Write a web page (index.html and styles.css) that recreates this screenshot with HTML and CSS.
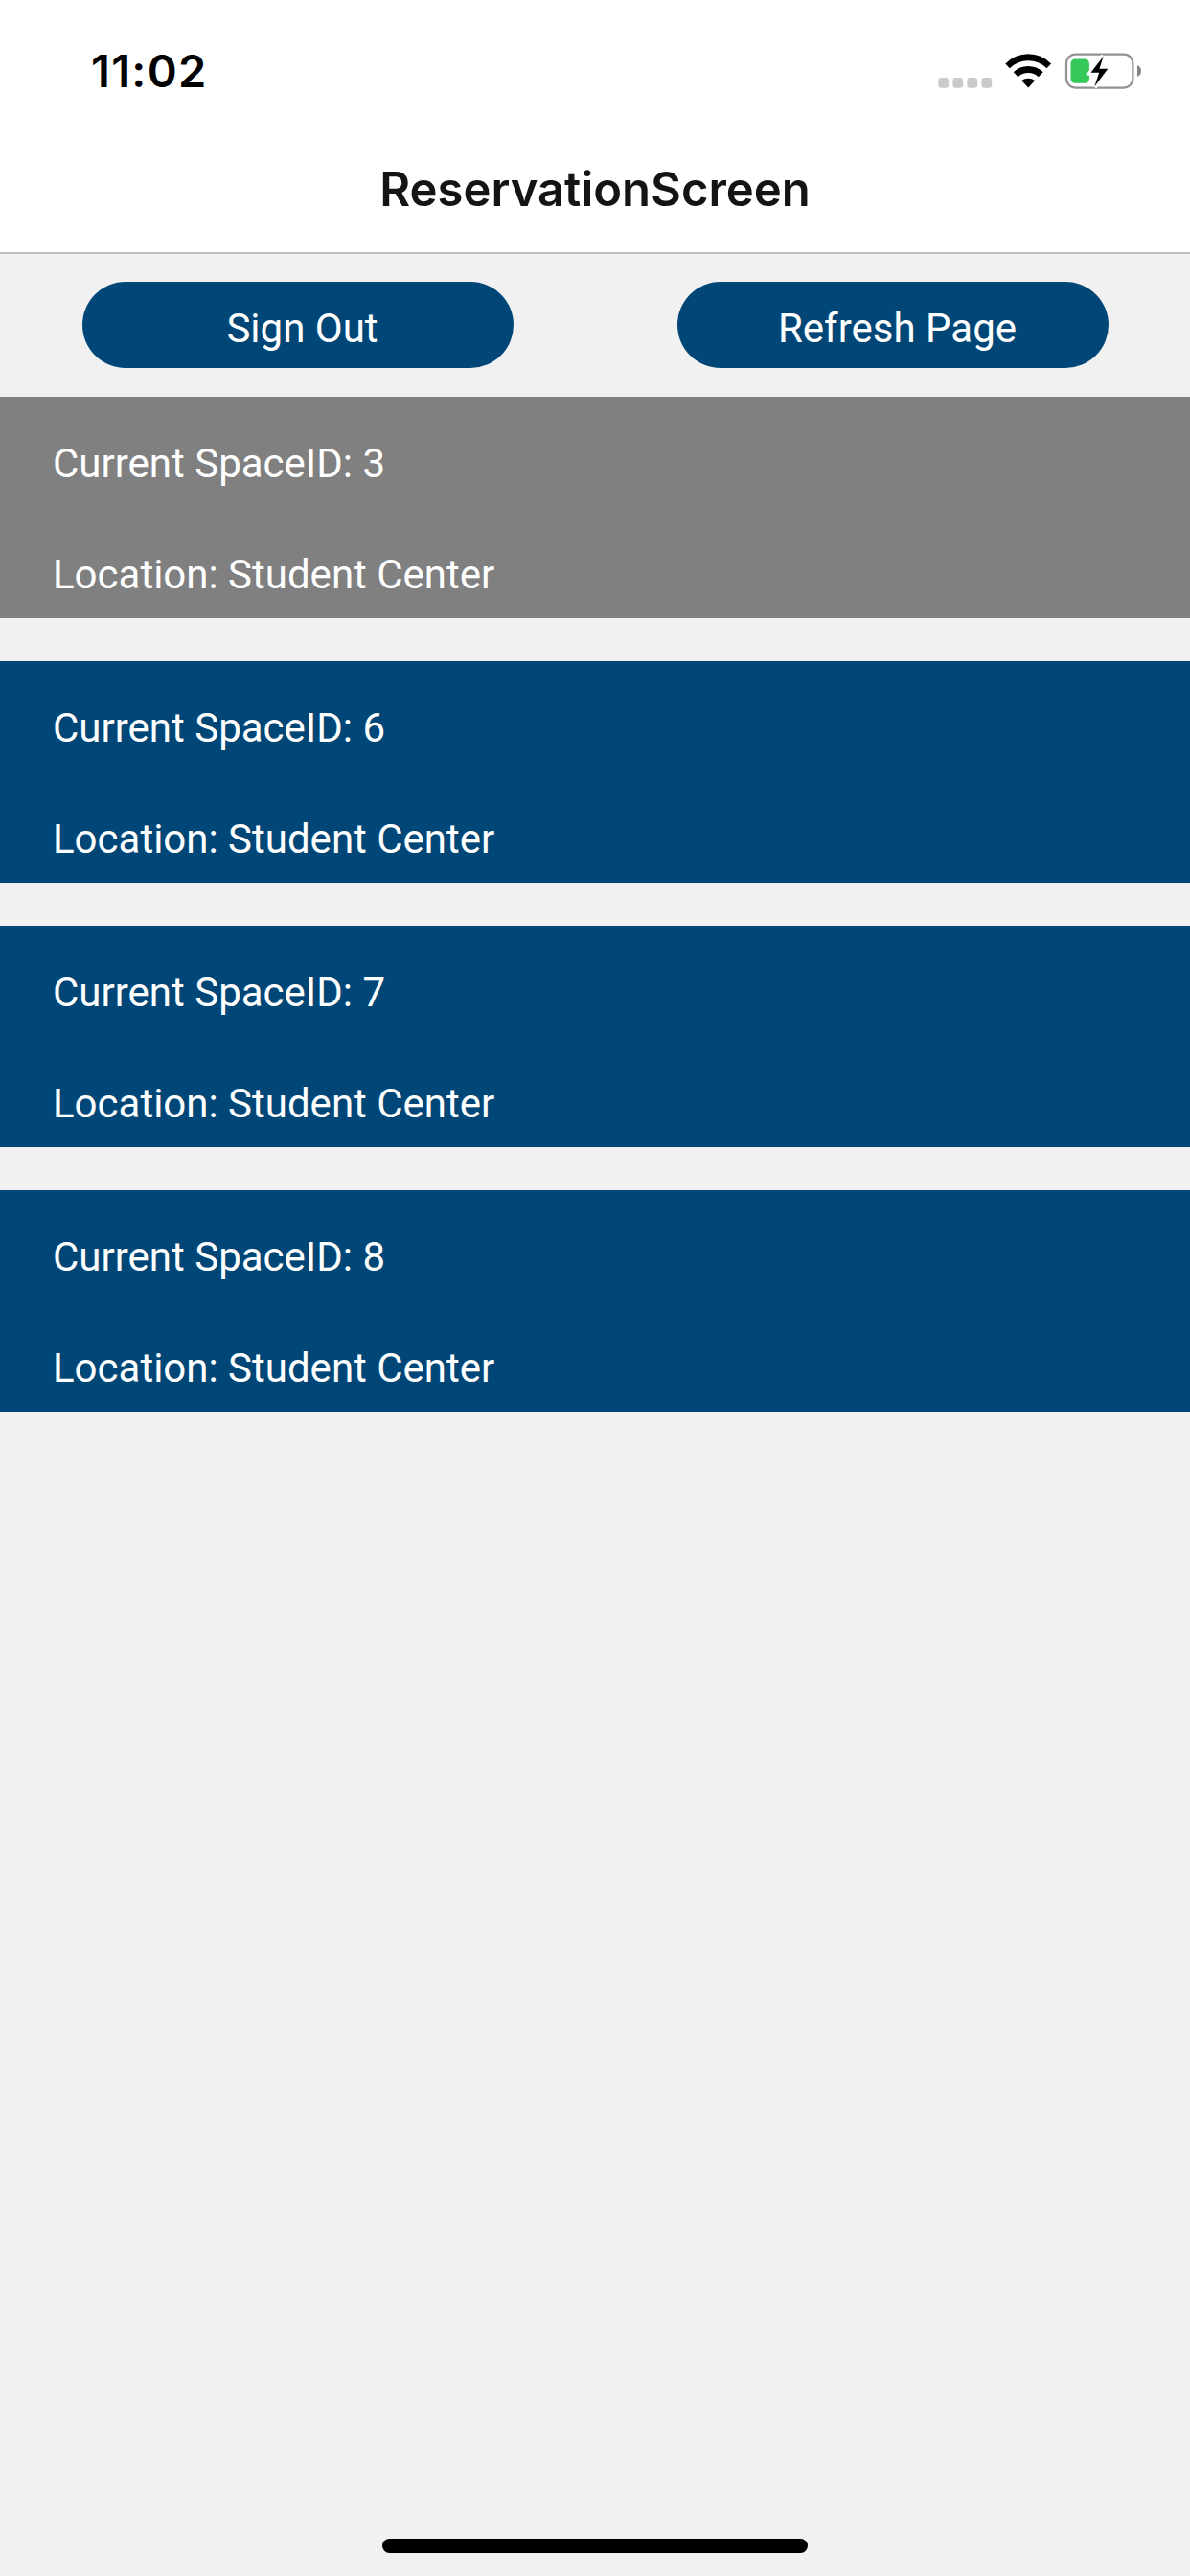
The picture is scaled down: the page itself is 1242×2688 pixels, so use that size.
FILE: index.html
```html
<!DOCTYPE html>
<html lang="en">
<head>
<meta charset="utf-8">
<title>ReservationScreen</title>
<link rel="stylesheet" href="styles.css">
</head>
<body>
<div class="screen">
  <header class="header">
    <div class="status">
      <span class="time">11:02</span>
      <svg class="status-icons" viewBox="976 54 220 40" aria-hidden="true">
        <g fill="#cacaca">
          <rect x="979.3" y="81" width="10.8" height="10.8" rx="3"/>
          <rect x="994.4" y="81" width="10.8" height="10.8" rx="3"/>
          <rect x="1009.4" y="81" width="10.8" height="10.8" rx="3"/>
          <rect x="1024.4" y="81" width="10.8" height="10.8" rx="3"/>
        </g>
        <path d="M1049.3 66.5Q1059.4 56.3 1073.2 56.3T1097.1 66.5L1092.5 71.3Q1084.3 63.3 1073.2 63.3T1053.9 71.3Z"/>
        <path d="M1057.7 75.2Q1064.4 69 1073.2 69T1088.7 75.2L1083.8 80.2Q1079.2 76 1073.2 76T1062.6 80.2Z"/>
        <path d="M1066.2 84Q1069.2 81.7 1073.2 81.7T1080.2 84L1073.2 91.6Z"/>
        <rect x="1113" y="56.6" width="69.4" height="35" rx="9.5" fill="#fff" stroke="#929292" stroke-width="2.2"/>
        <path d="M1187 68Q1191 69.5 1191 74T1187 80Z" fill="#858585"/>
        <rect x="1117.5" y="61.6" width="19.4" height="25.2" rx="4.5" fill="#34c759"/>
        <path d="M1151.7 58.5L1138.5 75.8H1147.2L1142.2 90.5L1156.3 71.7H1147.5Z" fill="#fff" stroke="#fff" stroke-width="5.5"/>
        <path d="M1151.7 58.5L1138.5 75.8H1147.2L1142.2 90.5L1156.3 71.7H1147.5Z"/>
      </svg>
    </div>
    <h1 class="title">ReservationScreen</h1>
  </header>
  <main class="content">
    <div class="actions">
      <button class="button">Sign Out</button>
      <button class="button">Refresh Page</button>
    </div>
    <div class="spaces">
      <section class="space space-current"><p>Current SpaceID: 3</p><p>Location: Student Center</p></section>
      <section class="space"><p>Current SpaceID: 6</p><p>Location: Student Center</p></section>
      <section class="space"><p>Current SpaceID: 7</p><p>Location: Student Center</p></section>
      <section class="space"><p>Current SpaceID: 8</p><p>Location: Student Center</p></section>
    </div>
  </main>
  <footer class="footer"><div class="home-indicator"></div></footer>
</div>
</body>
</html>
```
FILE: styles.css
```css
* { box-sizing: border-box; }
body { margin: 0; background: #f1f1f1; font-family: Roboto, sans-serif; }
.screen { width: 1242px; height: 2688px; display: flex; flex-direction: column; background: #f1f1f1; }
.header { height: 265px; background: #fff; border-bottom: 2px solid #bcbcbc; font-family: Inter, sans-serif; }
.status { height: 132px; padding: 54px 46px 0 95px; display: flex; justify-content: space-between; align-items: flex-start; }
.time { font-size: 47px; line-height: 40px; font-weight: 600; letter-spacing: 1.3px; color: #000; }
.status-icons { width: 220px; height: 40px; }
.title { margin: 0; height: 131px; line-height: 132px; text-align: center; font-size: 49px; font-weight: 600; color: #141414; }
.content { flex: 1; }
.actions { height: 149px; padding-top: 29px; display: flex; justify-content: space-around; }
.button { width: 450px; height: 90px; padding: 8px 0 0 10px; border: 0; border-radius: 45px; background: #004777; color: #fff; font: 400 42px/80px Roboto, sans-serif; }
.spaces { display: flex; flex-direction: column; gap: 45px; }
.space { height: 231px; padding: 45px 55px 0; background: #004777; color: #fff; font-size: 42px; line-height: 50px; display: flex; flex-direction: column; gap: 66px; }
.space p { margin: 0; }
.space-current { background: #808080; }
.footer { height: 39px; display: flex; justify-content: center; }
.home-indicator { width: 444px; height: 15px; border-radius: 8px; background: #000; }
```
